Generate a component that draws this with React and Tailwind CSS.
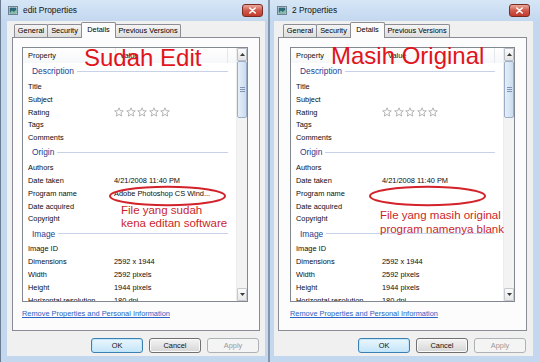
import React from 'react';

const rowsFor = (edited) => [
  { g: 'Description' },
  { l: 'Title' },
  { l: 'Subject' },
  { l: 'Rating', stars: true },
  { l: 'Tags' },
  { l: 'Comments' },
  { g: 'Origin' },
  { l: 'Authors' },
  { l: 'Date taken', v: '4/21/2008 11:40 PM' },
  { l: 'Program name', v: edited ? 'Adobe Photoshop CS Wind...' : '' },
  { l: 'Date acquired' },
  { l: 'Copyright' },
  { g: 'Image' },
  { l: 'Image ID' },
  { l: 'Dimensions', v: '2592 x 1944' },
  { l: 'Width', v: '2592 pixels' },
  { l: 'Height', v: '1944 pixels' },
  { l: 'Horizontal resolution', v: '180 dpi' },
  { l: 'Vertical resolution', v: '180 dpi' },
];

function Star() {
  return (
    <svg width="10" height="10" viewBox="0 0 10 10">
      <polygon
        points="5,0.8 6.2,3.7 9.3,3.9 6.9,5.9 7.7,9.1 5,7.4 2.3,9.1 3.1,5.9 0.7,3.9 3.8,3.7"
        fill="#ffffff"
        stroke="#a3a3a3"
        strokeWidth="0.8"
        strokeLinejoin="round"
      />
    </svg>
  );
}

function TitleIcon() {
  return (
    <svg width="10" height="9" viewBox="0 0 10 9">
      <rect x="0.5" y="0.5" width="9" height="8" fill="#f4f7fa" stroke="#6f8194" />
      <rect x="1.5" y="1.5" width="7" height="6" fill="#2c6a7a" />
      <path d="M1.5 7.5 L4 4.6 L5.8 6 L8.5 3.6 V7.5 Z" fill="#86c0a6" />
    </svg>
  );
}

function CloseBtn() {
  return (
    <div className="flex h-[13px] w-[21px] items-center justify-center rounded-[3px] border border-[#7a2b24] bg-linear-to-b from-[#e9a99e] via-[#d0594c] to-[#c23a2c]">
      <svg width="9" height="7" viewBox="0 0 9 7">
        <path d="M1.8 1 L7.2 6 M7.2 1 L1.8 6" stroke="#ffffff" strokeWidth="1.6" strokeLinecap="round" />
      </svg>
    </div>
  );
}

function Tabs({ ml }) {
  const base =
    'flex items-center justify-center border border-b-0 border-[#8c8e94] text-[7.4px] text-black rounded-t-[2px]';
  const off = `${base} h-[13px] mb-px bg-linear-to-b from-[#f4f4f4] to-[#dedede]`;
  return (
    <div className={`relative z-10 -mb-px flex h-[16px] items-end ${ml}`}>
      <div className={`${off} w-[34px]`}>General</div>
      <div className={`${off} -ml-px w-[35px]`}>Security</div>
      <div className={`${base} -ml-px h-[16px] w-[35px] bg-[#fcfcfc] pb-[2px]`}>Details</div>
      <div className={`${off} -ml-px w-[66px]`}>Previous Versions</div>
    </div>
  );
}

function Scrollbar() {
  return (
    <div className="flex w-[11px] flex-col border-l border-[#ececec] bg-[#f3f3f3]">
      <div className="flex h-[13px] items-center justify-center rounded-[1px] border border-[#b9bfc8] bg-linear-to-b from-[#fbfbfb] to-[#e4e4e4]">
        <svg width="5" height="3" viewBox="0 0 5 3">
          <path d="M0 3 L2.5 0 L5 3 Z" fill="#3a3a3a" />
        </svg>
      </div>
      <div className="flex h-[57px] flex-col items-center justify-center gap-[1px] rounded-[2px] border border-[#9aaec8] bg-linear-to-r from-[#e6eff9] to-[#cadcf0]">
        <div className="h-px w-[5px] bg-[#7f95b3]" />
        <div className="h-px w-[5px] bg-[#7f95b3]" />
        <div className="h-px w-[5px] bg-[#7f95b3]" />
      </div>
      <div className="mt-auto flex h-[13px] items-center justify-center rounded-[1px] border border-[#c4c9d0] bg-linear-to-b from-[#fbfbfb] to-[#e8e8e8]">
        <svg width="5" height="3" viewBox="0 0 5 3">
          <path d="M0 0 L2.5 3 L5 0 Z" fill="#3a3a3a" />
        </svg>
      </div>
    </div>
  );
}

function PropBox({ edited }) {
  const rows = rowsFor(edited);
  return (
    <div className="flex h-[255px] border border-[#828790] bg-white">
      <div className="flex min-w-0 flex-1 flex-col overflow-hidden">
        <div className="flex h-[15px] shrink-0 items-center bg-linear-to-b from-[#ffffff] to-[#f6f7f9] text-[7.4px] text-[#111]">
          <div className="flex h-full w-[93px] items-center border-r border-[#e4e7eb] pl-[5px]">Property</div>
          <div className="flex h-full flex-1 items-center border-r border-[#e4e7eb] pl-[4px]">Value</div>
          <div className="w-[8px]" />
        </div>
        {rows.map((r, i) =>
          r.g ? (
            <div key={i} className="flex h-[17px] shrink-0 items-center pl-[9px]">
              <span className="text-[8.4px] text-[#1e3d8f]">{r.g}</span>
              <div className="ml-[3px] mr-[8px] h-px flex-1 bg-[#c7d1e7]" />
            </div>
          ) : (
            <div key={i} className="flex h-[12.85px] shrink-0 items-center text-[7.4px] text-[#0c0c0c]">
              <div className="w-[91px] shrink-0 whitespace-nowrap pl-[5px]">{r.l}</div>
              <div className="flex items-center gap-[1.6px] whitespace-nowrap">
                {r.stars ? (
                  <>
                    <Star />
                    <Star />
                    <Star />
                    <Star />
                    <Star />
                  </>
                ) : (
                  r.v
                )}
              </div>
            </div>
          )
        )}
      </div>
      <Scrollbar />
    </div>
  );
}

function Buttons() {
  return (
    <div className="mt-[7px] flex justify-end gap-[6px] pr-[1px] text-[7.4px]">
      <div className="flex h-[15px] w-[52px] items-center justify-center rounded-[3px] border border-[#3c7fb1] bg-linear-to-b from-[#eaf6fd] to-[#c4e5f8] text-[#111] shadow-[inset_0_0_0_1px_#bfe6fb]">
        OK
      </div>
      <div className="flex h-[15px] w-[52px] items-center justify-center rounded-[3px] border border-[#707070] bg-linear-to-b from-[#f4f4f4] to-[#d6d6d6] text-[#111] shadow-[inset_0_0_0_1px_#fafafa]">
        Cancel
      </div>
      <div className="flex h-[15px] w-[52px] items-center justify-center rounded-[3px] border border-[#adb2b5] bg-[#f4f4f4] text-[#9a9a9a]">
        Apply
      </div>
    </div>
  );
}

function Ellipse({ cls }) {
  return (
    <svg className={cls} width="119" height="22" viewBox="0 0 119 22">
      <ellipse cx="59.5" cy="11" rx="57.5" ry="9.3" fill="none" stroke="#d3222a" strokeWidth="2" />
    </svg>
  );
}

function Window({ cfg, title, edited, children }) {
  return (
    <div className={`relative flex h-[362px] shrink-0 flex-col bg-[#c3d8ef] ${cfg.w} ${cfg.outer}`}>
      <div className={`flex h-[21px] shrink-0 items-center bg-linear-to-b from-[#d6e6f6] to-[#c3d8ef] ${cfg.titlePad}`}>
        <TitleIcon />
        <span className="ml-[5px] text-[8.4px] text-[#141414]">{title}</span>
        <div className="ml-auto">
          <CloseBtn />
        </div>
      </div>
      <div className={`flex flex-1 flex-col pb-[6px] ${cfg.bodyPad}`}>
        <div className={`flex flex-1 flex-col bg-[#f0f0f0] pt-[1px] ${cfg.contentPad}`}>
          <Tabs ml={cfg.tabMl} />
          <div className={`flex h-[294px] flex-col border border-[#898c95] bg-[#fcfcfc] pt-[9px] ${cfg.boxPad}`}>
            <PropBox edited={edited} />
            <div className="mt-[7px] flex h-[10px] items-center text-[7.4px] text-[#2a62c6] underline">
              Remove Properties and Personal Information
            </div>
          </div>
          <Buttons />
        </div>
      </div>
      {children}
    </div>
  );
}

export default function App() {
  const left = {
    w: 'w-[268px]',
    outer: 'border-l border-[#6a7b92]',
    titlePad: 'pl-[7px] pr-[5px]',
    bodyPad: 'pl-[6px] pr-[3px]',
    contentPad: 'pl-[5px] pr-[5px]',
    tabMl: 'ml-[2px]',
    boxPad: 'pl-[9px] pr-[11px]',
  };
  const right = {
    w: 'w-[270px]',
    outer: '',
    titlePad: 'pl-[7px] pr-[10px]',
    bodyPad: 'pl-[4px] pr-[7px]',
    contentPad: 'pl-[4px] pr-[6px]',
    tabMl: 'ml-[5px]',
    boxPad: 'pl-[11px] pr-[11px]',
  };
  return (
    <div className="flex h-[362px] w-[540px] overflow-hidden font-['Liberation_Sans',Arial,sans-serif]">
      <Window cfg={left} title="edit Properties" edited>
        <div className="absolute left-[83px] top-[46px] whitespace-nowrap text-[24px] leading-[24px] text-[#e0141c]">
          Sudah Edit
        </div>
        <Ellipse cls="absolute left-[107px] top-[185px]" />
        <div className="absolute left-[120px] top-[204px] whitespace-nowrap text-[11.5px] leading-[13px] text-[#cc1f2b]">
          File yang sudah
          <br />
          kena editan software
        </div>
      </Window>
      <div className="w-[2px] shrink-0 bg-[#8595aa]" />
      <Window cfg={right} title="2 Properties" edited={false}>
        <div className="absolute left-[61px] top-[44px] whitespace-nowrap text-[24px] leading-[24px] text-[#e0141c]">
          Masih Original
        </div>
        <Ellipse cls="absolute left-[98px] top-[185px]" />
        <div className="absolute left-[110px] top-[208px] whitespace-nowrap text-[11.5px] leading-[14px] text-[#cc1f2b]">
          File yang masih original
          <br />
          program namenya blank
        </div>
      </Window>
    </div>
  );
}
